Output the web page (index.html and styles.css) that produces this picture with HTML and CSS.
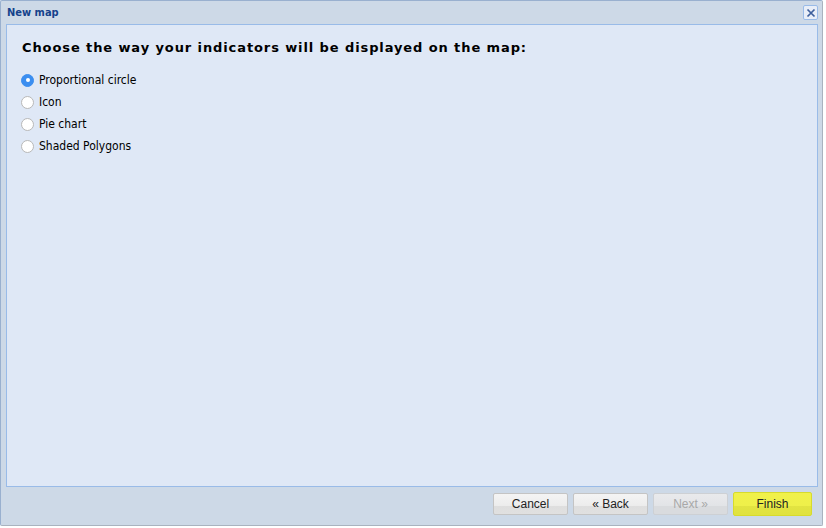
FILE: index.html
```html
<!DOCTYPE html>
<html>
<head>
<meta charset="utf-8">
<link rel="stylesheet" href="styles.css">
</head>
<body>
<div class="window">
  <div class="titlebar">
    <span class="title">New map</span>
    <span class="close"><svg width="10" height="10" viewBox="0 0 10 10"><path d="M1.5 1.5L8.5 8.5M8.5 1.5L1.5 8.5" stroke="#3d5f9c" stroke-width="1.7"/></svg></span>
  </div>
  <div class="panel">
    <div class="heading">Choose the way your indicators will be displayed on the map:</div>
    <div class="options">
      <label class="opt"><span class="radio checked"></span>Proportional circle</label>
      <label class="opt"><span class="radio"></span>Icon</label>
      <label class="opt"><span class="radio"></span>Pie chart</label>
      <label class="opt"><span class="radio"></span>Shaded Polygons</label>
    </div>
  </div>
  <div class="footer">
    <button class="btn">Cancel</button>
    <button class="btn">« Back</button>
    <button class="btn disabled">Next »</button>
    <button class="btn finish">Finish</button>
  </div>
</div>
</body>
</html>
```
FILE: styles.css
```css
html, body { margin: 0; padding: 0; background: #fff; }
body { width: 826px; height: 528px; overflow: hidden; }
.window {
  width: 821px; height: 524px;
  background: #cdd9e7;
  border: 1px solid #99b0cf;
  border-right-color: #a9b3bf;
  border-bottom-color: #a9b3bf;
  display: flex; flex-direction: column;
  box-sizing: content-box;
  border-radius: 2px;
}
.titlebar {
  height: 23px;
  display: flex; align-items: center; justify-content: space-between;
  padding: 0 4px 0 6px;
}
.title {
  font-family: "DejaVu Sans Condensed", "DejaVu Sans", sans-serif;
  font-stretch: condensed;
  font-weight: bold; font-size: 11px; color: #15428b;
  margin-top: -1px;
}
.close {
  width: 15px; height: 15px;
  background: #e8eef8; border: 1px solid #99bbe8; border-radius: 2px;
  display: flex; align-items: center; justify-content: center;
  box-sizing: border-box;
}
.panel {
  margin: 0 4px 0 5px;
  height: 463px;
  background: #dfe8f6;
  border: 1px solid #99bbe8;
  padding: 15px 15px;
  box-sizing: border-box;
}
.heading {
  font-family: "DejaVu Sans", sans-serif;
  font-weight: bold; font-size: 13px; color: #000;
  letter-spacing: 0.9px;
  line-height: 15px;
  margin-bottom: 18px;
}
.options { display: flex; flex-direction: column; gap: 8px; margin-left: -1px; }
.opt {
  display: flex; align-items: center; gap: 5px;
  font-family: "DejaVu Sans Condensed", "DejaVu Sans", sans-serif;
  font-stretch: condensed;
  font-size: 12px; color: #000;
  height: 14px;
}
.radio {
  width: 13px; height: 13px; border-radius: 50%;
  background: #fff; border: 1px solid #b8b8b8;
  box-sizing: border-box; position: relative;
}
.radio.checked { background: #3b8ef0; border-color: #3b8ef0; }
.radio.checked::after {
  content: ""; position: absolute; left: 3.5px; top: 3.5px;
  width: 4px; height: 4px; border-radius: 50%; background: #fff;
}
.footer {
  flex: 1; display: flex; justify-content: flex-end; align-items: flex-start;
  gap: 5px; padding: 6px 10px 0 0;
}
.btn {
  width: 75px; height: 22px;
  font-family: "Liberation Sans", sans-serif; font-size: 12px; color: #222;
  border: 1px solid #c4c4c4; border-radius: 2px;
  background: linear-gradient(#f4f4f4 0, #ececec 60%, #dedede 60%, #e0e0e0 100%);
  padding: 0;
}
.btn.disabled { color: #a8a8a8; background: linear-gradient(#e9eaec 0, #e2e4e7 60%, #d9dbde 60%, #d9dbde 100%); border-color: #cdd0d4; }
.btn.finish {
  width: 79px; height: 24px; margin-top: -1px;
  background: linear-gradient(#f1f14a 0, #eef04a 60%, #e2e442 60%, #e0e23e 100%);
  border-color: #d7db2c;
  color: #222;
}
```
